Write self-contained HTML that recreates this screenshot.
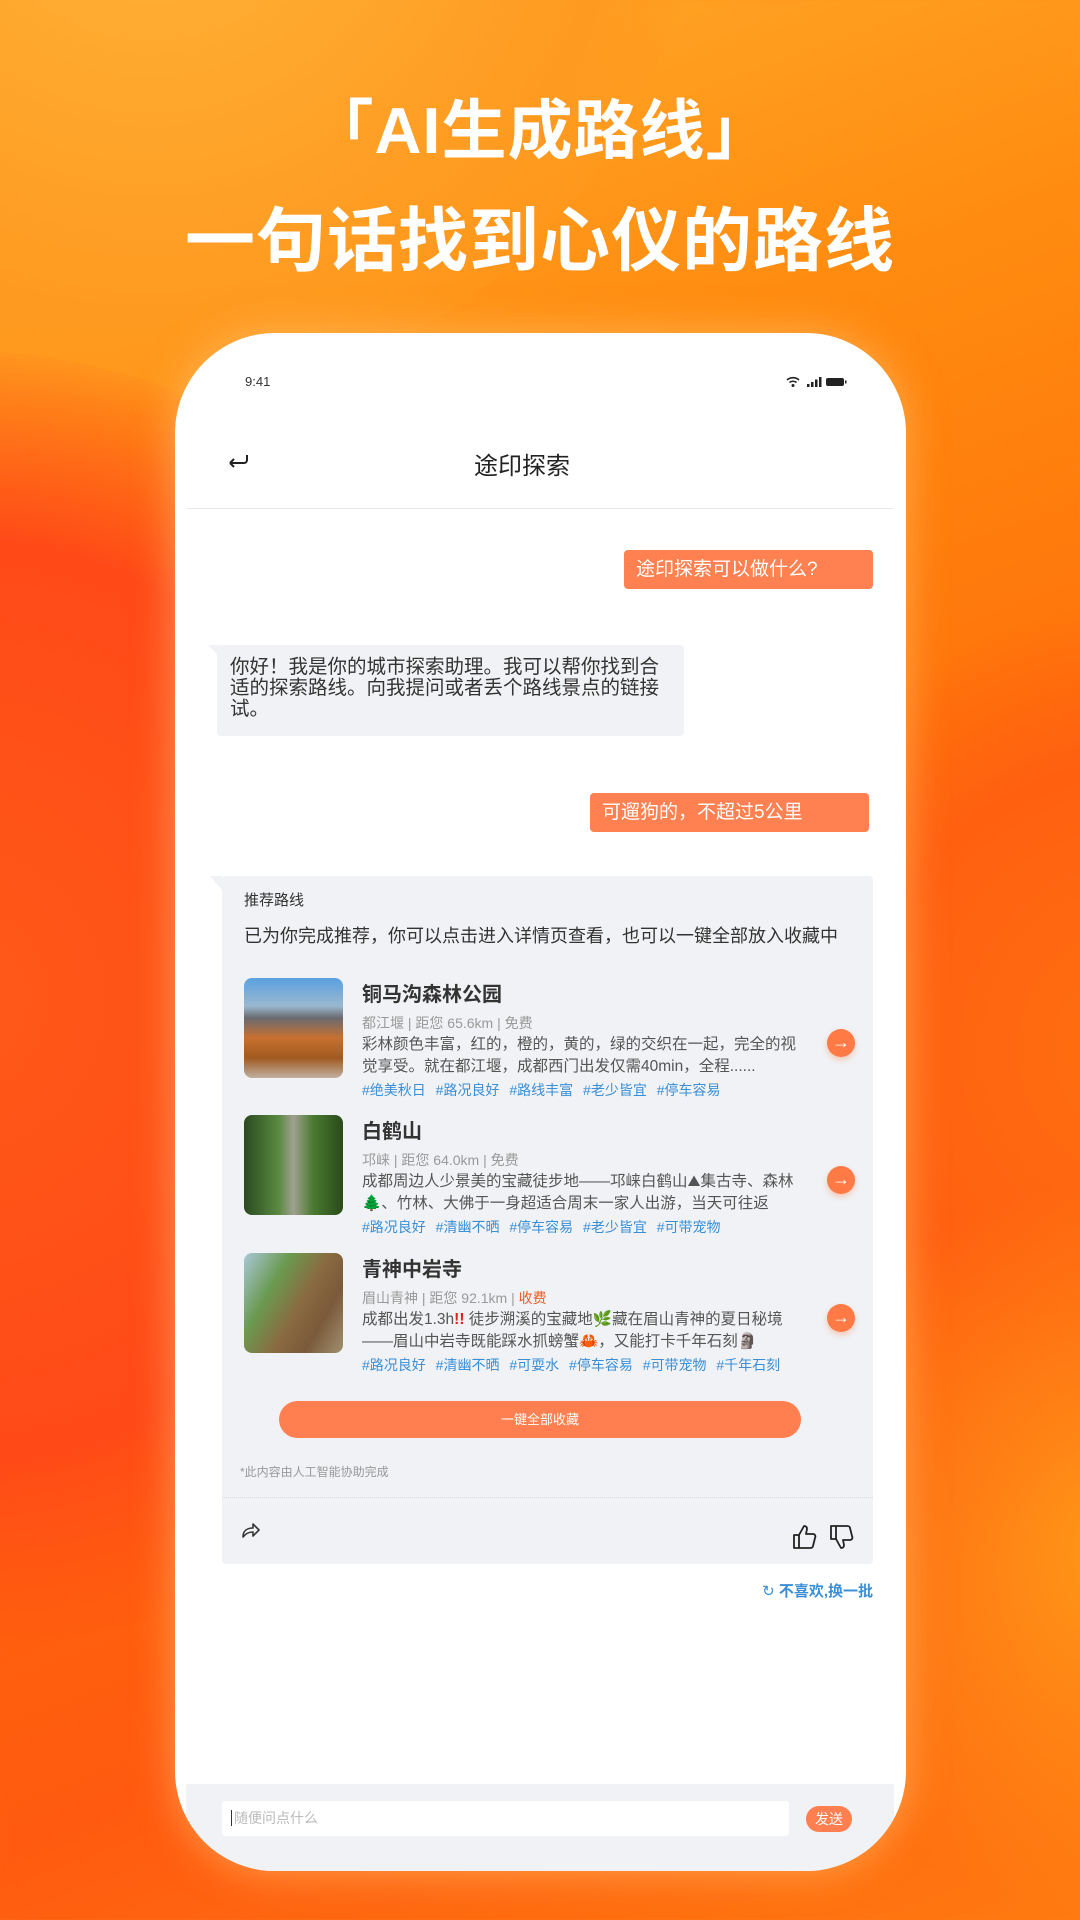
<!DOCTYPE html>
<html><head><meta charset="utf-8"><style>
*{margin:0;padding:0;box-sizing:border-box}
html,body{width:1080px;height:1920px;overflow:hidden}
body{position:relative;font-family:"Liberation Sans","Noto Sans CJK SC",sans-serif;
background:linear-gradient(160deg,#ffb030 0%,#ff8c10 25%,#ff6a08 55%,#ff5a10 80%,#ff7a10 100%);}
.a{position:absolute}
.blob{position:absolute;border-radius:50%}
.t{color:#fff;text-align:center;width:1080px;left:0;font-weight:bold;letter-spacing:1px}
.phone{left:175px;top:333px;width:731px;height:1538px;background:#fff;border-radius:100px;box-shadow:0 0 40px rgba(255,200,120,.6);overflow:hidden}
.ob{background:#ff8050;color:#fff;font-size:19px;line-height:39px;padding-left:12px;border-radius:4px}
.gb{background:#f0f2f5;border-radius:4px}
.it{position:absolute;left:244px;width:620px;height:130px}
.img{position:absolute;left:0;top:0;width:99px;height:100px;border-radius:8px}
.tt{position:absolute;left:118px;top:0;font-size:20px;color:#333;font-weight:bold}
.mt{position:absolute;left:118px;top:35px;font-size:14px;color:#999}
.ds{position:absolute;left:118px;top:56px;width:470px;font-size:15.5px;line-height:22px;color:#555;white-space:nowrap}
.tg{position:absolute;left:118px;top:102px;font-size:14px;color:#3a8fd6;word-spacing:6px}
.ar{position:absolute;left:583px;top:51px;width:28px;height:28px;border-radius:50%;background:#ff7a45;color:#fff;font-size:18px;line-height:27px;text-align:center;box-shadow:0 3px 6px rgba(255,120,60,.35)}
</style></head><body>
<div class="blob" style="left:-400px;top:-700px;width:1100px;height:1100px;background:radial-gradient(circle,#ffb43a 0%,#ff9a20 60%,rgba(255,140,20,0) 75%)"></div>
<div class="blob" style="left:-700px;top:350px;width:1300px;height:1300px;background:radial-gradient(circle,#ff5a18 0%,#ff4a18 50%,rgba(255,80,20,0) 72%)"></div>
<div class="blob" style="left:700px;top:600px;width:900px;height:900px;background:radial-gradient(circle,#ff7010 0%,#ff6010 45%,rgba(255,100,10,0) 70%)"></div>
<div class="blob" style="left:780px;top:1100px;width:700px;height:900px;background:radial-gradient(circle,#ff9a18 0%,rgba(255,140,20,0) 65%)"></div>
<div class="a t" style="top:78px;font-size:65px">「AI生成路线」</div>
<div class="a t" style="top:185px;font-size:70px">一句话找到心仪的路线</div>

<div class="a phone"><div class="a" style="left:11px;top:1451px;width:708px;height:100px;background:#f0f2f5"></div></div>
<div class="a" style="left:245px;top:374px;font-size:13px;color:#333">9:41</div>
<svg class="a" style="left:786px;top:376px" width="64" height="12" viewBox="0 0 64 12"><path d="M1 4a9 9 0 0 1 12 0M3.5 6.5a5.5 5.5 0 0 1 7 0" stroke="#222" stroke-width="1.6" fill="none"/><circle cx="7" cy="9.5" r="1.5" fill="#222"/><rect x="21" y="8" width="2.5" height="3" fill="#222"/><rect x="25" y="6" width="2.5" height="5" fill="#222"/><rect x="29" y="3.5" width="2.5" height="7.5" fill="#222"/><rect x="33" y="1" width="2.5" height="10" fill="#222"/><rect x="40" y="2" width="18" height="8" rx="2" fill="#222"/><rect x="59" y="4.5" width="1.5" height="3" fill="#222"/></svg>
<svg class="a" style="left:226px;top:451px" width="24" height="20" viewBox="0 0 24 20"><path d="M21 4v5a3 3 0 0 1-3 3H4M4 12l4-4M4 12l4 4" stroke="#222" stroke-width="2" fill="none"/></svg>
<div class="a" style="left:422px;top:446px;width:200px;text-align:center;font-size:24px;color:#222">途印探索</div>
<div class="a" style="left:186px;top:508px;width:708px;height:1px;background:#e8e8e8"></div>

<div class="a ob" style="left:624px;top:550px;width:249px">途印探索可以做什么?</div>
<div class="a gb" style="left:217px;top:645px;width:467px;height:91px;padding:12px 0 0 13px;font-size:19.5px;line-height:21px;color:#333;white-space:nowrap">你好！我是你的城市探索助理。我可以帮你找到合<br>适的探索路线。向我提问或者丢个路线景点的链接<br>试。</div>
<div class="a" style="left:208px;top:645px;width:0;height:0;border-top:10px solid #f0f2f5;border-left:10px solid transparent"></div>
<div class="a ob" style="left:590px;top:793px;width:279px">可遛狗的，不超过5公里</div>

<div class="a gb" style="left:222px;top:876px;width:651px;height:688px"></div>
<div class="a" style="left:210px;top:876px;border-top:14px solid #f0f2f5;border-left:12px solid transparent"></div>
<div class="a" style="left:244px;top:889px;font-size:15px;color:#333">推荐路线</div>
<div class="a" style="left:244px;top:922px;font-size:18px;color:#333">已为你完成推荐，你可以点击进入详情页查看，也可以一键全部放入收藏中</div>

<div class="it" style="top:978px">
<div class="img" style="background:linear-gradient(180deg,#5aa0e0 0%,#9ab8d0 28%,#6a6a70 40%,#c87030 60%,#a05a20 80%,#c0b0a0 100%)"></div>
<div class="tt">铜马沟森林公园</div><div class="mt">都江堰 | 距您 65.6km | 免费</div>
<div class="ds">彩林颜色丰富，红的，橙的，黄的，绿的交织在一起，完全的视<br>觉享受。就在都江堰，成都西门出发仅需40min，全程......</div>
<div class="tg">#绝美秋日 #路况良好 #路线丰富 #老少皆宜 #停车容易</div><div class="ar">→</div></div>
<div class="it" style="top:1115px">
<div class="img" style="background:linear-gradient(90deg,#2a4a20,#5a8a40 35%,#a0a090 50%,#4a7a30 70%,#2a4a1a)"></div>
<div class="tt">白鹤山</div><div class="mt">邛崃 | 距您 64.0km | 免费</div>
<div class="ds">成都周边人少景美的宝藏徒步地——邛崃白鹤山⛰集古寺、森林<br>🌲、竹林、大佛于一身超适合周末一家人出游，当天可往返</div>
<div class="tg">#路况良好 #清幽不晒 #停车容易 #老少皆宜 #可带宠物</div><div class="ar">→</div></div>
<div class="it" style="top:1253px">
<div class="img" style="background:linear-gradient(120deg,#a8c8d8 0%,#6a9a50 30%,#8a6a40 55%,#7a5a3a 75%,#a09070 100%)"></div>
<div class="tt">青神中岩寺</div><div class="mt">眉山青神 | 距您 92.1km | <span style="color:#f05a28">收费</span></div>
<div class="ds">成都出发1.3h<span style="color:#e02020;font-weight:bold">!!</span> 徒步溯溪的宝藏地🌿藏在眉山青神的夏日秘境<br>——眉山中岩寺既能踩水抓螃蟹🦀，又能打卡千年石刻🗿</div>
<div class="tg">#路况良好 #清幽不晒 #可耍水 #停车容易 #可带宠物 #千年石刻</div><div class="ar">→</div></div>

<div class="a" style="left:279px;top:1401px;width:522px;height:37px;border-radius:19px;background:#ff7f50;color:#fff;font-size:13px;line-height:37px;text-align:center">一键全部收藏</div>
<div class="a" style="left:240px;top:1463px;font-size:12px;color:#999">*此内容由人工智能协助完成</div>
<div class="a" style="left:222px;top:1497px;width:651px;border-top:1px dotted #dadada"></div>
<svg class="a" style="left:240px;top:1520px" width="22" height="20" viewBox="0 0 22 20"><path d="M3 17c0-6 4-9 10-9V4l6 6-6 6v-4c-4 0-7 1-10 5z" stroke="#333" stroke-width="1.6" fill="none" stroke-linejoin="round"/></svg>
<svg class="a" style="left:792px;top:1524px" width="26" height="26" viewBox="0 0 26 26"><path d="M2 11h5v13H2zM7 11l5-9c2 0 3 1 3 3l-1 5h7c2 0 3 2 2 4l-2 8c0 1-1 2-3 2H7" stroke="#222" stroke-width="1.8" fill="none" stroke-linejoin="round"/></svg>
<svg class="a" style="left:829px;top:1524px" width="26" height="26" viewBox="0 0 26 26"><path d="M2 2h5v13H2zM7 15l5 9c2 0 3-1 3-3l-1-5h7c2 0 3-2 2-4l-2-8c0-1-1-2-3-2H7" stroke="#222" stroke-width="1.8" fill="none" stroke-linejoin="round"/></svg>
<div class="a" style="left:742px;top:1580px;width:131px;text-align:right;font-size:15px;font-weight:bold;color:#3a8fd6"><span style="font-weight:normal">↻</span> 不喜欢,换一批</div>

<div class="a" style="left:222px;top:1801px;width:567px;height:35px;background:#fff;border-radius:3px;font-size:14px;color:#bbb;line-height:35px;padding-left:9px"><span style="border-left:1.5px solid #333;padding-left:2px">随便问点什么</span></div>
<div class="a" style="left:806px;top:1806px;width:46px;height:26px;border-radius:13px;background:#ff7f50;color:#fff;font-size:14px;line-height:26px;text-align:center">发送</div>
</body></html>
